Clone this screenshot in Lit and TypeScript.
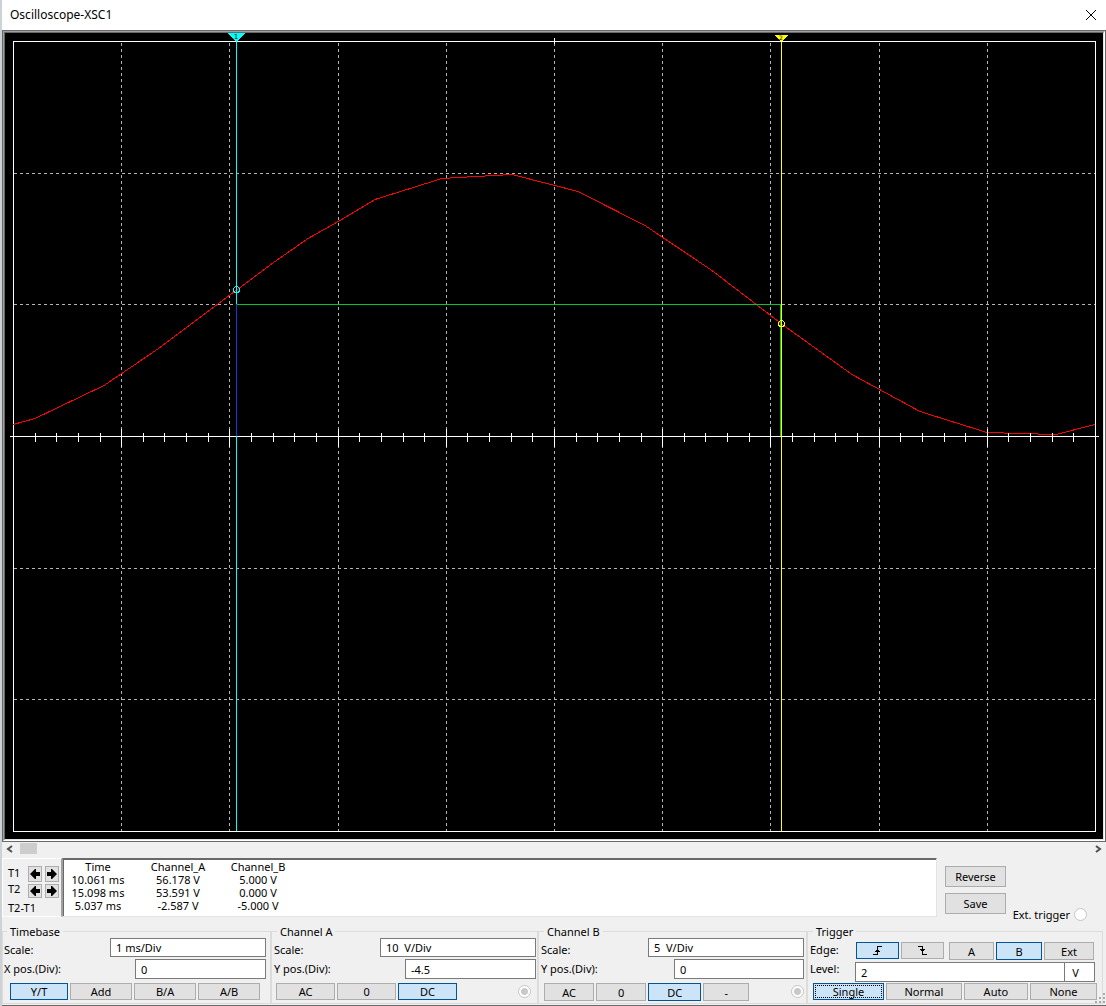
import { LitElement, html, svg, css } from "lit";
import { customElement, state } from "lit/decorators.js";

const FRAME = { left: 13, right: 1095 };
const AXIS_Y = 436;
const COLUMNS = [121, 229, 338, 446, 554, 662, 770, 879, 987];
const ROWS = [173, 304, 568, 699];
const TICKS = Array.from({ length: 49 }, (_, i) => i + 1);

const TRACE: [number, number][] = [
  [13, 424], [35, 418], [104, 385], [160, 347], [220, 302], [236, 290],
  [275, 261], [308, 238], [340, 220], [375, 199], [442, 178], [476, 176],
  [512, 174], [578, 191], [645, 225], [712, 270], [781, 323], [852, 374],
  [920, 411], [987, 432], [1020, 433], [1056, 434], [1095, 424],
];

@customElement("scope-screen")
class ScopeScreen extends LitElement {
  static styles = css`
    :host {
      display: block;
      border: 1px solid #696969;
    }
    .mid {
      border: 1px solid;
      border-color: #a0a0a0 #ffffff #ffffff #a0a0a0;
    }
    .inner {
      border: 1px solid;
      border-color: #696969 #e3e3e3 #e3e3e3 #696969;
      background: #000;
    }
    svg {
      display: block;
      width: 100%;
      height: auto;
    }
    .grid {
      stroke: #b4b4b4;
      stroke-dasharray: 3 3;
    }
    .white {
      stroke: #fff;
      fill: none;
    }
    .trace {
      stroke: #f00;
      fill: none;
    }
    .cyan {
      stroke: #0ff;
      fill: none;
    }
    .yellow {
      stroke: #ff0;
      fill: none;
    }
    .blue {
      stroke: #0040e8;
    }
    .green {
      stroke: #00c828;
      fill: none;
    }
    .flag-cyan {
      fill: #0ff;
    }
    .flag-yellow {
      fill: #ff0;
    }
    .digit {
      font: 7px "DejaVu Sans", sans-serif;
      text-anchor: middle;
    }
    .small {
      font-size: 6px;
    }
  `;

  render() {
    return html`<div class="mid"><div class="inner">
      <svg viewBox="5 33 1098 806" shape-rendering="crispEdges" role="img" aria-label="Oscilloscope display">
        ${COLUMNS.map((x) => svg`<line class="grid" x1=${x + 0.5} x2=${x + 0.5} y1="43" y2="831"></line>`)}
        ${ROWS.map((y) => svg`<line class="grid" x1="14" x2="1095" y1=${y + 0.5} y2=${y + 0.5}></line>`)}
        <rect class="white" x="13.5" y="41.5" width="1082" height="790"></rect>
        <line class="white" x1="554.5" x2="554.5" y1="38" y2="44"></line>
        <path class="trace" d=${"M" + TRACE.map(([x, y]) => `${x} ${y + 0.5}`).join("L")}></path>
        <line class="white" x1="10" x2="1099" y1=${AXIS_Y + 0.5} y2=${AXIS_Y + 0.5}></line>
        ${TICKS.map((i) => {
          const x = Math.round(FRAME.left + ((FRAME.right - FRAME.left) * i) / 50) + 0.5;
          const major = i % 5 === 0;
          return svg`<line class="white" x1=${x} x2=${x} y1=${major ? 429 : 433} y2=${major ? 447 : 442}></line>`;
        })}
        <line class="cyan" x1="236.5" x2="236.5" y1="41" y2="831"></line>
        <line class="yellow" x1="781.5" x2="781.5" y1="41" y2="831"></line>
        <line class="blue" x1="236.5" x2="236.5" y1="304" y2="436"></line>
        <path class="green" d="M237 304.5H780.5V436"></path>
        <path class="flag-cyan" d="M228 33H245L237 42H236Z"></path>
        <text class="digit" x="236" y="39">1</text>
        <path class="flag-yellow" d="M775 35H788L782 42H781Z"></path>
        <text class="digit small" x="781" y="40">2</text>
        <circle class="cyan" cx="236.5" cy="289.5" r="3"></circle>
        <circle class="yellow" cx="781.5" cy="323.5" r="3"></circle>
      </svg>
    </div></div>`;
  }
}

type Row = [string, string, string];

@customElement("app-root")
class AppRoot extends LitElement {
  static styles = css`
    :host {
      display: block;
      background: #f0f0f0;
      border-left: 2px solid #cdd2d5;
      color: #000;
      font: 11px/13px "Noto Sans", "Open Sans", sans-serif;
    }
    * {
      box-sizing: border-box;
    }
    .title {
      display: flex;
      align-items: center;
      justify-content: space-between;
      height: 30px;
      padding: 0 8px;
      background: #fff;
      font-size: 12px;
      line-height: 16px;
    }
    h1 {
      margin: 0;
      font: inherit;
    }
    button,
    input {
      font: inherit;
      color: inherit;
      margin: 0;
      padding: 0;
      border-radius: 0;
    }
    button {
      display: flex;
      align-items: center;
      justify-content: center;
      background: #e1e1e1;
      border: 1px solid #adadad;
      min-width: 0;
    }
    button[aria-pressed="true"] {
      background: #cce4f7;
      border-color: #00549a;
    }
    button.bare {
      background: none;
      border: 0;
    }
    button.focus {
      outline: 1px dotted #000;
      outline-offset: -3px;
    }
    svg {
      display: block;
    }
    .scroll {
      display: flex;
      align-items: center;
      height: 13px;
      padding: 0 1px;
    }
    .scroll button {
      width: 14px;
      height: 13px;
    }
    .scroll input {
      flex: 1;
      min-width: 0;
      height: 11px;
      margin: 0 3px;
      appearance: none;
      background: none;
    }
    .scroll input::-webkit-slider-thumb {
      appearance: none;
      width: 17px;
      height: 11px;
      background: #cdcdcd;
    }
    .readings {
      display: flex;
      align-items: flex-start;
      padding-top: 3px;
      height: 62px;
    }
    .cursors {
      display: grid;
      grid-template-columns: 17px 14px 14px;
      grid-template-rows: 16px 14px 14px;
      column-gap: 3px;
      row-gap: 2px;
      width: 60px;
      height: 59px;
      padding: 7px 0 0 5px;
      border: 1px solid #fff;
      border-color: #fff #a0a0a0 #fff #fff;
    }
    .cursors .second {
      margin-top: -2px;
    }
    .cursors .delta {
      grid-column: 1 / -1;
      padding-top: 1px;
    }
    .screen {
      flex: 1;
      height: 59px;
      border: 1px solid;
      border-color: #696969 #e3e3e3 #e3e3e3 #a0a0a0;
      box-shadow: inset 1px 1px #696969;
      background: #fff;
      padding: 1px;
    }
    table {
      border-collapse: collapse;
      table-layout: fixed;
      width: 228px;
    }
    th,
    td {
      padding: 0;
      font-weight: normal;
      text-align: center;
      white-space: nowrap;
    }
    .wide {
      width: 92px;
    }
    .side {
      display: flex;
      width: 169px;
      padding: 8px 19px 0 8px;
      justify-content: space-between;
      align-items: flex-end;
    }
    .pair {
      display: grid;
      gap: 6px;
      width: 61px;
    }
    .pair button {
      height: 21px;
    }
    .ext {
      display: flex;
      align-items: center;
      gap: 4px;
      margin-bottom: -7px;
      white-space: nowrap;
    }
    input[type="radio"] {
      appearance: none;
      flex: none;
      width: 13px;
      height: 13px;
      border: 1px solid #c6c6c6;
      border-radius: 50%;
      background: #fff;
    }
    input[type="radio"]:checked {
      background: radial-gradient(circle, #c8c8c8 0 3px, #fff 4px);
    }
    .groups {
      display: grid;
      grid-template-columns: 269fr 267fr 269fr 296fr;
      padding: 8px 3px 0 0;
    }
    fieldset {
      min-width: 0;
      margin: 0;
      padding: 0 4px 3px 1px;
      border: 1px solid #dcdcdc;
    }
    .channel-a {
      padding: 0 1px 3px 2px;
    }
    .channel-b {
      padding: 0 2px 3px 2px;
    }
    .trigger {
      padding: 0 7px 3px 2px;
    }
    legend {
      margin-left: 3px;
      padding: 0 3px;
      height: 13px;
    }
    .form {
      display: grid;
      grid-template-columns: 106px 25px 1fr;
      grid-template-rows: 19px 20px;
      row-gap: 2px;
    }
    .channel-b .form {
      grid-template-columns: 107px 26px 1fr;
    }
    .form label {
      padding-top: 5px;
    }
    .form label.pos {
      grid-column: 1 / 3;
      padding-top: 3px;
    }
    .form input {
      grid-column: 2 / 4;
    }
    .form .pos-input {
      grid-column: 3;
    }
    .form input,
    .level input {
      min-width: 0;
      width: 100%;
      padding: 0 5px;
      border: 1px solid #7a7a7a;
      background: #fff;
      white-space: pre;
    }
    .modes {
      display: flex;
      justify-content: space-between;
      align-items: center;
      padding: 4px 5px 0 2px;
    }
    .strip {
      display: flex;
      flex: 0 0 71%;
      gap: 2px;
      height: 17px;
    }
    .strip.full {
      flex: 1;
    }
    .timebase .modes {
      padding: 4px 6px 0;
    }
    .strip button {
      flex: 1;
    }
    .timebase .strip button + button {
      flex: 62;
    }
    .timebase .strip button:first-child {
      flex: 58;
    }
    .channel-b .modes {
      padding: 4px 0 0 3px;
    }
    .channel-b .strip {
      flex-basis: 79%;
      height: 18px;
      margin-bottom: -1px;
    }
    .channel-b .strip button {
      flex: 50;
    }
    .channel-b .strip button:nth-child(3) {
      flex: 53;
    }
    .channel-b .strip button:nth-child(4) {
      flex: 46;
    }
    .edge {
      display: grid;
      grid-template-columns: 44px 43fr 43fr 1px 45fr 46fr 50fr;
      column-gap: 2px;
      height: 22px;
      padding: 4px 1px 0 0;
    }
    .edge span {
      padding-top: 1px;
    }
    .edge .slope {
      height: 17px;
    }
    .edge .source {
      height: 18px;
    }
    .edge .first {
      grid-column: 5;
    }
    .level {
      display: grid;
      grid-template-columns: 45px 1fr 30px;
      height: 22px;
      padding-top: 2px;
    }
    .level input + input {
      margin-left: -1px;
      width: 31px;
      text-align: center;
      padding: 0 8px 0 0;
    }
    .trigger .modes {
      padding: 1px 0 0;
      margin: 0 -2px 0 3px;
    }
    .trigger .strip button:nth-child(1) {
      flex: 71;
    }
    .trigger .strip button:nth-child(2) {
      flex: 76;
    }
    .trigger .strip button:nth-child(3) {
      flex: 64;
    }
    .trigger .strip button:nth-child(4) {
      flex: 67;
    }
    .bottom {
      position: relative;
      height: 2px;
      border-bottom: 1px solid #696969;
    }
    .grip {
      position: absolute;
      right: 0;
      bottom: 1px;
      fill: #a8a8a8;
    }
  `;

  @state() private timebase = "Y/T";
  @state() private couplingA = "DC";
  @state() private couplingB = "DC";
  @state() private slope = "rise";
  @state() private source = "B";
  @state() private sweep = "Single";

  private rows: Row[] = [
    ["10.061 ms", "56.178 V", "5.000 V"],
    ["15.098 ms", "53.591 V", "0.000 V"],
    ["5.037 ms", "-2.587 V", "-5.000 V"],
  ];

  private options(names: string[], current: string, pick: (n: string) => void, focus = false) {
    return names.map((n) => html`<button
      class=${focus && n === current ? "focus" : ""}
      aria-pressed=${n === current ? "true" : "false"}
      @click=${() => pick(n)}>${n}</button>`);
  }

  private arrow(label: string, left: boolean) {
    return html`<button aria-label=${label}>
      <svg width="10" height="10" viewBox="0 0 10 10">
        <path d=${left ? "M0 5L5 0H6V3H10V7H6V10H5Z" : "M10 5L5 0H4V3H0V7H4V10H5Z"}></path>
      </svg></button>`;
  }

  private form(id: string, scale: string, axis: string, pos: string) {
    return html`<div class="form">
      <label for="${id}-scale">Scale:</label>
      <input id="${id}-scale" .value=${scale}>
      <label class="pos" for="${id}-pos">${axis} pos.(Div):</label>
      <input class="pos-input" id="${id}-pos" .value=${pos}>
    </div>`;
  }

  render() {
    return html`
      <header class="title">
        <h1>Oscilloscope-XSC1</h1>
        <button class="bare" aria-label="Close">
          <svg width="14" height="12" viewBox="0 0 14 12" stroke="#000" fill="none">
            <path d="M2 1L12 11M12 1L2 11"></path>
          </svg>
        </button>
      </header>
      <scope-screen></scope-screen>
      <div class="scroll">
        <button class="bare" aria-label="Scroll left">
          <svg width="8" height="8" viewBox="0 0 8 8" stroke="#505050" stroke-width="2" fill="none"><path d="M6 1L2 4L6 7"></path></svg>
        </button>
        <input type="range" aria-label="Time position" min="0" max="100" value="0">
        <button class="bare" aria-label="Scroll right">
          <svg width="8" height="8" viewBox="0 0 8 8" stroke="#505050" stroke-width="2" fill="none"><path d="M2 1L6 4L2 7"></path></svg>
        </button>
      </div>
      <section class="readings">
        <div class="cursors">
          <span>T1</span>${this.arrow("T1 left", true)}${this.arrow("T1 right", false)}
          <span class="second">T2</span>${this.arrow("T2 left", true)}${this.arrow("T2 right", false)}
          <span class="delta">T2-T1</span>
        </div>
        <div class="screen">
          <table>
            <tr><th>Time</th><th class="wide">Channel_A</th><th>Channel_B</th></tr>
            ${this.rows.map((r) => html`<tr>${r.map((c) => html`<td>${c}</td>`)}</tr>`)}
          </table>
        </div>
        <div class="side">
          <div class="pair"><button>Reverse</button><button>Save</button></div>
          <label class="ext">Ext. trigger <input type="radio" name="ext"></label>
        </div>
      </section>
      <section class="groups">
        <fieldset class="timebase">
          <legend>Timebase</legend>
          ${this.form("time", "1 ms/Div", "X", "0")}
          <div class="modes"><div class="strip full">
            ${this.options(["Y/T", "Add", "B/A", "A/B"], this.timebase, (n) => (this.timebase = n))}
          </div></div>
        </fieldset>
        <fieldset class="channel-a">
          <legend>Channel A</legend>
          ${this.form("a", "10  V/Div", "Y", "-4.5")}
          <div class="modes">
            <div class="strip">${this.options(["AC", "0", "DC"], this.couplingA, (n) => (this.couplingA = n))}</div>
            <input type="radio" name="a-input" aria-label="Channel A input" checked>
          </div>
        </fieldset>
        <fieldset class="channel-b">
          <legend>Channel B</legend>
          ${this.form("b", "5  V/Div", "Y", "0")}
          <div class="modes">
            <div class="strip">${this.options(["AC", "0", "DC", "-"], this.couplingB, (n) => (this.couplingB = n))}</div>
            <input type="radio" name="b-input" aria-label="Channel B input" checked>
          </div>
        </fieldset>
        <fieldset class="trigger">
          <legend>Trigger</legend>
          <div class="edge">
            <span>Edge:</span>
            <button class="slope" aria-label="Rising edge" aria-pressed=${this.slope === "rise" ? "true" : "false"} @click=${() => (this.slope = "rise")}>
              <svg width="10" height="9" viewBox="0 0 10 9" stroke="#000" fill="none" shape-rendering="crispEdges">
                <path d="M0 8.5H5M4.500 9V0M4 .5H9M2 5.500H7M3 4.500H6"></path>
              </svg>
            </button>
            <button class="slope" aria-label="Falling edge" aria-pressed=${this.slope === "fall" ? "true" : "false"} @click=${() => (this.slope = "fall")}>
              <svg width="10" height="9" viewBox="0 0 10 9" stroke="#000" fill="none" shape-rendering="crispEdges">
                <path d="M0 .5H5M4.500 0V9M4 8.500H9M2 3.500H7M3 4.500H6"></path>
              </svg>
            </button>
            ${["A", "B", "Ext"].map((n, i) => html`<button
              class="source ${i === 0 ? "first" : ""}"
              aria-pressed=${n === this.source ? "true" : "false"}
              @click=${() => (this.source = n)}>${n}</button>`)}
          </div>
          <div class="level">
            <label for="level">Level:</label>
            <input id="level" .value=${"2"}>
            <input aria-label="Level unit" .value=${"V"}>
          </div>
          <div class="modes"><div class="strip full">
            ${this.options(["Single", "Normal", "Auto", "None"], this.sweep, (n) => (this.sweep = n), true)}
          </div></div>
        </fieldset>
      </section>
      <div class="bottom">
        <svg class="grip" width="11" height="11" viewBox="0 0 11 11" aria-hidden="true">
          <path d="M8 0h2v2h-2zM4 4h2v2h-2zM8 4h2v2h-2zM0 8h2v2h-2zM4 8h2v2h-2zM8 8h2v2h-2z"></path>
        </svg>
      </div>
    `;
  }
}
